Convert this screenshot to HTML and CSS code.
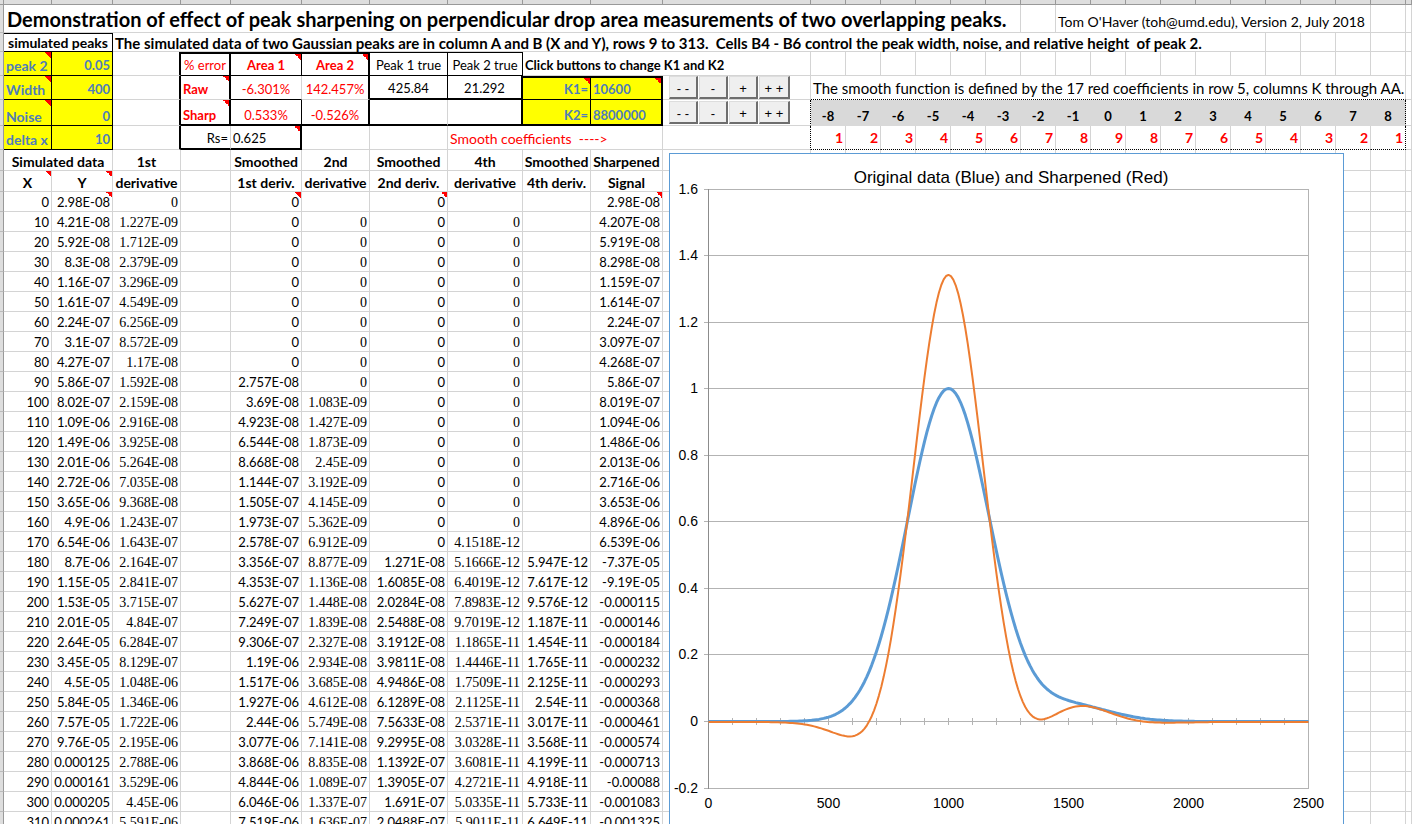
FILE: index.html
```html
<!DOCTYPE html>
<html lang="en">
<head>
<meta charset="utf-8">
<title>Peak sharpening</title>
<link rel="stylesheet" href="styles.css">
</head>
<body>
<main class="sheet">
<table class="grid">
<colgroup>
<col class="w-gutter"><col class="w-a"><col class="w-b"><col class="w-c"><col class="w-d"><col class="w-e"><col class="w-f"><col class="w-g"><col class="w-h"><col class="w-i"><col class="w-j"><col class="w-k"><col class="w-n" span="17"><col>
</colgroup>
<thead><tr class="heads" id="heads"></tr></thead>
<tbody id="cells">
<tr class="r-title"><th class="gut"></th><td colspan="17" class="title">Demonstration of effect of peak sharpening on perpendicular drop area measurements of two overlapping peaks.</td><td></td><td colspan="9" class="l note-text">Tom O'Haver (toh@umd.edu), Version 2, July 2018</td><td></td><td></td></tr>
<tr class="r-sub"><th class="gut"></th><td colspan="2" class="h c kb kr kt">simulated peaks</td><td colspan="22" class="b l sub">The simulated data of two Gaussian peaks are in column A and B (X and Y), rows 9 to 313.&nbsp; Cells B4 - B6 control the peak width, noise, and relative height&nbsp; of peak 2.</td><td></td><td></td><td></td><td></td><td></td></tr>
</tbody>
</table>
<svg class="chart" id="chart" viewBox="669 153 675 700" role="img" aria-label="Original data (Blue) and Sharpened (Red)"></svg>
</main>
<script src="app.js"></script>
</body>
</html>
```

FILE: styles.css
```css
body { margin: 0; background: #fff; color: #000; font: 13px/17px Lato, Carlito, sans-serif; }
.sheet { position: relative; height: 100vh; overflow: hidden; }
.grid { width: 100%; table-layout: fixed; border-collapse: separate; border-spacing: 0; }
.w-gutter { width: 4px; } .w-a { width: 48px; } .w-b { width: 61px; } .w-c { width: 68px; }
.w-d { width: 50px; } .w-e { width: 71px; } .w-f { width: 68px; } .w-g { width: 78px; }
.w-h { width: 75px; } .w-i { width: 68px; } .w-j { width: 72px; } .w-k { width: 148px; }
.w-n { width: 35px; }
td, th { box-sizing: border-box; padding: 0 2px; border: 0 solid #d4d4d4; border-right-width: 1px; border-bottom-width: 1px; text-align: right; vertical-align: bottom; white-space: nowrap; }
.heads { height: 5px; }
.heads th { height: 5px; line-height: 4px; padding: 0; background: #dedede; border-color: #999; }
.gut { padding: 0; background: #dedede; border-color: #bbb; border-right-color: #999; }
tr { height: 20px; }
.r-title { height: 28px; }
.r-sub { height: 19px; line-height: 16px; }
.r24 { height: 24px; line-height: 19px; }
.r26 { height: 26px; }
.r21 { height: 21px; }
.title { font-size: 20px; line-height: 26px; font-weight: 700; text-align: left; vertical-align: middle; padding-left: 3px; }
.note-text { font-size: 14px; line-height: 20px; }
.smooth { font-size: 15px; line-height: 22px; }
.sub { font-size: 15px; line-height: 16px; }
.l { text-align: left; } .c { text-align: center; } .b { font-weight: 700; }
.h { font-weight: 700; font-size: 14px; padding: 0; }
.serif { font-family: "Liberation Serif", serif; font-size: 14px; }
.red { color: #f00; }
.y { background-color: #ff0; color: #4f7dba; font-weight: 700; }
.y.big { font-size: 14px; }
.gray { background: #d9d9d9; border-color: #d9d9d9; font-weight: 700; text-align: center; }
.coef { color: #f00; font-size: 14px; line-height: 22px; font-weight: 700; }
.kr { border-right-color: #000; } .kb { border-bottom-color: #000; } .kt { border-top: 1px solid #000; }
.Kr { border-right: 2px solid #000; } .Kb { border-bottom: 2px solid #000; } .Kt { border-top: 2px solid #000; }
.dr { border-right: 1px dotted #000; } .db { border-bottom: 1px dotted #000; }
.note { background-image: linear-gradient(to top right, transparent 50%, #f00 50%); background-size: 6px 6px; background-position: right top; background-repeat: no-repeat; }
.keys { padding: 0 0 0 6px; vertical-align: top; }
.r26 .keys { padding-top: 1px; }
.row { display: flex; gap: 1px; }
.row button { box-sizing: border-box; width: 29px; height: 23px; padding: 4px 0 0; border: 1px solid #ddd; border-right: 2px solid #6e6e6e; border-bottom: 2px solid #6e6e6e; background: #efefef; color: #000; font: 13px/14px "Liberation Sans", Arial, sans-serif; }
.row .wide { width: 31px; }
.chart { position: absolute; left: 669px; top: 153px; width: 675px; height: 700px; background: #fff; }
.frame { fill: #fff; stroke: #5b9bd5; }
.rule { stroke: #b3b3b3; fill: none; }
.axis { stroke: #8c8c8c; }
.lab { font: 14px "Liberation Sans", Arial, sans-serif; }
.head { font: 17px "Liberation Sans", Arial, sans-serif; }
.raw { fill: none; stroke: #5b9bd5; stroke-width: 3; stroke-linejoin: round; }
.sharp { fill: none; stroke: #ed7d31; stroke-width: 2; stroke-linejoin: round; }
```

FILE: app.js
```js
const td = (cls, text = '', span = 1) => `<td class="${cls}"${span > 1 ? ` colspan="${span}"` : ''}>${text}</td>`;
const gut = '<th class="gut"></th>';
const empties = n => '<td></td>'.repeat(n);
const row = (cls, cells) => `<tr class="${cls}">${gut}${cells}</tr>`;
const buttons = name => `<div class="row">${[['- -', 'big decrease'], ['-', 'decrease'], ['+', 'increase'], ['+ +', 'big increase']]
  .map(([t, a], i) => `<button type="button" aria-label="${name} ${a}"${i === 3 ? ' class="wide"' : ''}>${t}</button>`).join('')}</div>`;

document.getElementById('heads').innerHTML = '<th></th>'.repeat(30);
const body = document.getElementById('cells');

let html = '';
html += row('r24', td('y big l kb kr note', 'peak 2') + td('y kb kr', '0.05') + td('Kr') + td('red c kb Kr Kt', '% error')
  + td('red b c kb kr Kt note', 'Area 1') + td('red b c kb Kr Kt note', 'Area 2') + td('c kb kr kt', 'Peak 1 true')
  + td('c kb kr kt', 'Peak 2 true') + td('b l', 'Click buttons to change K1 and K2', 3) + empties(18));
html += row('r24', td('y big l kb kr note', 'Width') + td('y kb kr', '400') + td('Kr') + td('red b l Kr note', 'Raw')
  + td('red c kb', '-6.301%') + td('red c Kr', '142.457%') + td('c Kb kr', '425.84') + td('c Kb Kr', '21.292')
  + td('y kb kr Kt note', 'K1=') + td('y l kb Kr Kt note', '10600') + td('keys', buttons('K1'))
  + td('l smooth db', 'The smooth function is defined by the 17 red coefficients in row 5, columns K through AA.', 17) + td(''));
html += row('r26', td('y big l kb kr note', 'Noise') + td('y kb kr', '0') + td('Kr') + td('red b l Kb Kr note', 'Sharp')
  + td('red c Kb kr', '0.533%') + td('red c Kb Kr', '-0.526%') + td('Kb') + td('Kb Kr')
  + td('y Kb kr', 'K2=') + td('y l Kb Kr', '8800000') + td('keys dr', buttons('K2'))
  + Array.from({ length: 17 }, (_, i) => td('gray' + (i === 16 ? ' dr' : ''), i - 8)).join('') + td(''));
html += row('r24', td('y big l kb kr', 'delta x') + td('y kb kr', '10') + td('Kr') + td('Kb', 'Rs=')
  + td('l Kb Kr note', '0.625') + empties(2) + td('red l note-text', 'Smooth coefficients &nbsp;----&gt;', 3) + td('dr')
  + Array.from({ length: 17 }, (_, i) => td('coef db' + (i === 16 ? ' dr' : ''), 9 - Math.abs(i - 8))).join('') + td(''));
const names = list => list.map(t => td('h c', t)).join('') + empties(19);
html += row('r21', td('h c', 'Simulated data', 2) + names(['1st', '', 'Smoothed', '2nd', 'Smoothed', '4th', 'Smoothed', 'Sharpened']));
html += row('r21', td('h c note', 'X') + td('h c note', 'Y') + names(['derivative', '', '1st deriv.', 'derivative', '2nd deriv.', 'derivative', '4th deriv.', 'Signal']));

// Columns: Y, 1st, smoothed 1st, 2nd, smoothed 2nd, 4th, smoothed 4th, sharpened
const data = `2.98E-08,0,0,,0,,,2.98E-08
4.21E-08,1.227E-09,0,0,0,0,,4.207E-08
5.92E-08,1.712E-09,0,0,0,0,,5.919E-08
8.3E-08,2.379E-09,0,0,0,0,,8.298E-08
1.16E-07,3.296E-09,0,0,0,0,,1.159E-07
1.61E-07,4.549E-09,0,0,0,0,,1.614E-07
2.24E-07,6.256E-09,0,0,0,0,,2.24E-07
3.1E-07,8.572E-09,0,0,0,0,,3.097E-07
4.27E-07,1.17E-08,0,0,0,0,,4.268E-07
5.86E-07,1.592E-08,2.757E-08,0,0,0,,5.86E-07
8.02E-07,2.159E-08,3.69E-08,1.083E-09,0,0,,8.019E-07
1.09E-06,2.916E-08,4.923E-08,1.427E-09,0,0,,1.094E-06
1.49E-06,3.925E-08,6.544E-08,1.873E-09,0,0,,1.486E-06
2.01E-06,5.264E-08,8.668E-08,2.45E-09,0,0,,2.013E-06
2.72E-06,7.035E-08,1.144E-07,3.192E-09,0,0,,2.716E-06
3.65E-06,9.368E-08,1.505E-07,4.145E-09,0,0,,3.653E-06
4.9E-06,1.243E-07,1.973E-07,5.362E-09,0,0,,4.896E-06
6.54E-06,1.643E-07,2.578E-07,6.912E-09,0,4.1518E-12,,6.539E-06
8.7E-06,2.164E-07,3.356E-07,8.877E-09,1.271E-08,5.1666E-12,5.947E-12,-7.37E-05
1.15E-05,2.841E-07,4.353E-07,1.136E-08,1.6085E-08,6.4019E-12,7.617E-12,-9.19E-05
1.53E-05,3.715E-07,5.627E-07,1.448E-08,2.0284E-08,7.8983E-12,9.576E-12,-0.000115
2.01E-05,4.84E-07,7.249E-07,1.839E-08,2.5488E-08,9.7019E-12,1.187E-11,-0.000146
2.64E-05,6.284E-07,9.306E-07,2.327E-08,3.1912E-08,1.1865E-11,1.454E-11,-0.000184
3.45E-05,8.129E-07,1.19E-06,2.934E-08,3.9811E-08,1.4446E-11,1.765E-11,-0.000232
4.5E-05,1.048E-06,1.517E-06,3.685E-08,4.9486E-08,1.7509E-11,2.125E-11,-0.000293
5.84E-05,1.346E-06,1.927E-06,4.612E-08,6.1289E-08,2.1125E-11,2.54E-11,-0.000368
7.57E-05,1.722E-06,2.44E-06,5.749E-08,7.5633E-08,2.5371E-11,3.017E-11,-0.000461
9.76E-05,2.195E-06,3.077E-06,7.141E-08,9.2995E-08,3.0328E-11,3.568E-11,-0.000574
0.000125,2.788E-06,3.868E-06,8.835E-08,1.1392E-07,3.6081E-11,4.199E-11,-0.000713
0.000161,3.529E-06,4.844E-06,1.089E-07,1.3905E-07,4.2721E-11,4.918E-11,-0.00088
0.000205,4.45E-06,6.046E-06,1.337E-07,1.691E-07,5.0335E-11,5.733E-11,-0.001083
0.000261,5.591E-06,7.519E-06,1.636E-07,2.0488E-07,5.9011E-11,6.649E-11,-0.001325`.split('\n');
data.forEach((line, i) => {
  const v = line.split(',');
  const n = i === 0 ? 'note' : '';
  html += row('', td('', i * 10) + td(n, v[0]) + td('serif', v[1]) + td('') + td(n, v[2]) + td('serif', v[3])
    + td(n, v[4]) + td('serif', v[5]) + td('', v[6]) + td(n, v[7]) + empties(19));
});
body.insertAdjacentHTML('beforeend', html);

// Chart: two Gaussians and their even-derivative sharpened sum
const px = x => 708.5 + x * 0.24;
const py = y => 721.5 - y * 332.8;
const base = 400 * 400 * 0.3607 / 2;
const peaks = [[1000, 1], [1500, 0.05]];
const gauss = (x, extra, order) => peaks.reduce((sum, [c, h]) => {
  const s = base + extra, u = (x - c) ** 2 / s;
  const g = h * Math.sqrt(base / s) * Math.exp(-u / 2);
  return sum + (order === 0 ? g : order === 2 ? g * (u - 1) / s : g * (u * u - 6 * u + 3) / (s * s));
}, 0);
const line = (f, drop) => Array.from({ length: 251 }, (_, i) => `${px(i * 10).toFixed(1)},${(py(f(i * 10)) + drop).toFixed(1)}`).join(' ');
let svg = '<rect class="frame" x="669.5" y="153.5" width="674" height="720"/>';
svg += '<text class="head" x="1011" y="183" text-anchor="middle">Original data (Blue) and Sharpened (Red)</text>';
for (let i = -1; i <= 8; i++) {
  const y = Math.floor(py(i / 5)) + 0.5;
  svg += `<path class="rule" d="M704 ${y}H1308"/><text class="lab" x="698" y="${y + 4.5}" text-anchor="end">${i / 5}</text>`;
}
for (let i = 0; i <= 25; i++) svg += `<path class="rule" d="M${px(i * 100)} 718V725"/>`;
svg += '<path class="rule" d="M1308.5 189V789"/><path class="axis" d="M708.5 189V789"/>';
for (let i = 0; i <= 5; i++) svg += `<text class="lab" x="${px(i * 500)}" y="808" text-anchor="middle">${i * 500}</text>`;
svg += `<polyline class="raw" points="${line(x => gauss(x, 0, 0), 0)}"/>`;
svg += `<polyline class="sharp" points="${line(x => gauss(x, 0, 0) - 10600 * gauss(x, 2667, 2) + 8800000 * gauss(x, 4000, 4), 0.5)}"/>`;
document.getElementById('chart').innerHTML = svg;
```
